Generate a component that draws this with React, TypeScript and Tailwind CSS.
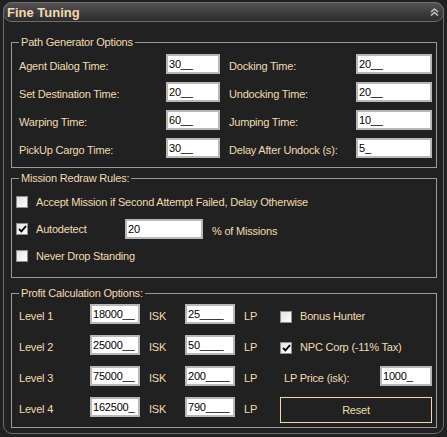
import React from "react";

const Check = ({ checked = false }: { checked?: boolean }) => (
  <span className="w-[12px] h-[12px] shrink-0 border border-[#8e8f8f] bg-gradient-to-br from-[#e2e2e2] to-[#ffffff] flex items-center justify-center">
    {checked && (
      <svg width="9" height="8" viewBox="0 0 9 8">
        <path d="M1 3.8 L3.4 6.3 L8 1.2" stroke="#000" strokeWidth="1.9" fill="none" />
      </svg>
    )}
  </span>
);

const Field = ({ value, w }: { value: string; w: string }) => (
  <input
    readOnly
    value={value}
    className={`${w} h-[20px] shrink-0 bg-white border-2 border-[#b8b8b8] text-black pl-[1px] text-[11px] tracking-[-0.2px] outline-none`}
  />
);

const Lbl = ({ children, w }: { children: React.ReactNode; w?: string }) => (
  <span className={`${w ?? ""} shrink-0 pt-[4px] whitespace-nowrap tracking-[-0.2px]`}>{children}</span>
);

const Group = ({ title, mt, children }: { title: string; mt: string; children: React.ReactNode }) => (
  <div className={`${mt} ml-[7px] w-[426px] border border-[#9a9a9a]`}>
    <span className="block w-fit -mt-[8px] ml-[7px] px-[2px] h-[14px] leading-[14px] bg-[#212121] tracking-[-0.2px]">
      {title}
    </span>
    {children}
  </div>
);

export default function App() {
  const rows = [
    ["Level 1", "18000__", "25____"],
    ["Level 2", "25000__", "50____"],
    ["Level 3", "75000__", "200____"],
    ["Level 4", "162500_", "790____"],
  ];
  return (
    <div className="w-[447px] h-[437px] bg-[#212121] font-['Liberation_Sans','Arial',sans-serif] text-[11px] text-[#f3dcb1] pt-[2px] pl-[3px] pr-[3px] pb-[3px]">
      <div className="h-full border border-[#6a6a6a] rounded-[9px] flex flex-col">
        <div className="-mx-px -mt-px h-[20px] rounded-[9px] border border-[#6e6e6e] bg-gradient-to-b from-[#545155] to-[#2d2b2e] flex items-center justify-between pl-[3px] pr-[4px]">
          <span className="text-[13px] font-bold text-[#f3d9a9] leading-none pt-[1px]">Fine Tuning</span>
          <svg width="9" height="8" viewBox="0 0 9 8">
            <path d="M1 4 L4.5 1 L8 4 M1 7.5 L4.5 4.5 L8 7.5" stroke="#c4c4c4" strokeWidth="1.5" fill="none" />
          </svg>
        </div>

        <Group title="Path Generator Options" mt="mt-[20px]">
          <div className="mt-[5px] pl-[7px] pb-[9px] flex flex-col gap-[8px]">
            {[
              ["Agent Dialog Time:", "30__", "Docking Time:", "20__"],
              ["Set Destination Time:", "20__", "Undocking Time:", "20__"],
              ["Warping Time:", "60__", "Jumping Time:", "10__"],
              ["PickUp Cargo Time:", "30__", "Delay After Undock (s):", "5_"],
            ].map(([a, av, b, bv]) => (
              <div key={a} className="flex items-center h-[20px]">
                <Lbl w="w-[147px]">{a}</Lbl>
                <Field value={av} w="w-[54px]" />
                <span className="ml-[9px]" />
                <Lbl w="w-[127px]">{b}</Lbl>
                <Field value={bv} w="w-[76px]" />
              </div>
            ))}
          </div>
        </Group>

        <Group title="Mission Redraw Rules:" mt="mt-[10px]">
          <div className="mt-[7px] pl-[4px] pb-[11px] flex flex-col gap-[7px]">
            <div className="flex items-center h-[20px] gap-[8px]">
              <Check />
              <span className="tracking-[-0.2px]">Accept Mission if Second Attempt Failed, Delay Otherwise</span>
            </div>
            <div className="flex items-center h-[20px]">
              <Check checked />
              <span className="ml-[8px] w-[89px] tracking-[-0.2px]">Autodetect</span>
              <Field value="20" w="w-[78px]" />
              <span className="ml-[9px] pt-[5px] tracking-[-0.2px]">% of Missions</span>
            </div>
            <div className="flex items-center h-[20px] gap-[8px]">
              <Check />
              <span className="tracking-[-0.2px]">Never Drop Standing</span>
            </div>
          </div>
        </Group>

        <Group title="Profit Calculation Options:" mt="mt-[15px]">
          <div className="mt-[4px] pl-[7px] pb-[4px] flex flex-col gap-[11px]">
            {rows.map(([lv, isk, lp], i) => (
              <div key={lv} className={i === 3 ? "flex items-start h-[26px]" : "flex items-center h-[20px]"}>
                <div className="flex items-center h-[20px]">
                  <Lbl w="w-[71px]">{lv}</Lbl>
                  <Field value={isk} w="w-[50px]" />
                  <Lbl w="ml-[9px] w-[36px]">ISK</Lbl>
                  <Field value={lp} w="w-[50px]" />
                  <Lbl w="ml-[9px] w-[36px]">LP</Lbl>
                </div>
                <div className="w-[152px] shrink-0">
                  {i === 0 && (
                    <div className="flex items-center h-[20px] pt-[5px] gap-[8px]">
                      <Check />
                      <span className="tracking-[-0.2px]">Bonus Hunter</span>
                    </div>
                  )}
                  {i === 1 && (
                    <div className="flex items-center h-[20px] pt-[5px] gap-[8px]">
                      <Check checked />
                      <span className="tracking-[-0.2px]">NPC Corp (-11% Tax)</span>
                    </div>
                  )}
                  {i === 2 && (
                    <div className="flex items-center h-[20px] pl-[4px]">
                      <Lbl>LP Price (isk):</Lbl>
                      <span className="ml-auto">
                        <Field value="1000_" w="w-[52px]" />
                      </span>
                    </div>
                  )}
                  {i === 3 && (
                    <button className="w-[152px] h-[26px] border border-[#f3d9a9] bg-transparent text-[#f3dcb1] text-[11px] tracking-[-0.2px] flex items-center justify-center">
                      Reset
                    </button>
                  )}
                </div>
              </div>
            ))}
          </div>
        </Group>
      </div>
    </div>
  );
}
